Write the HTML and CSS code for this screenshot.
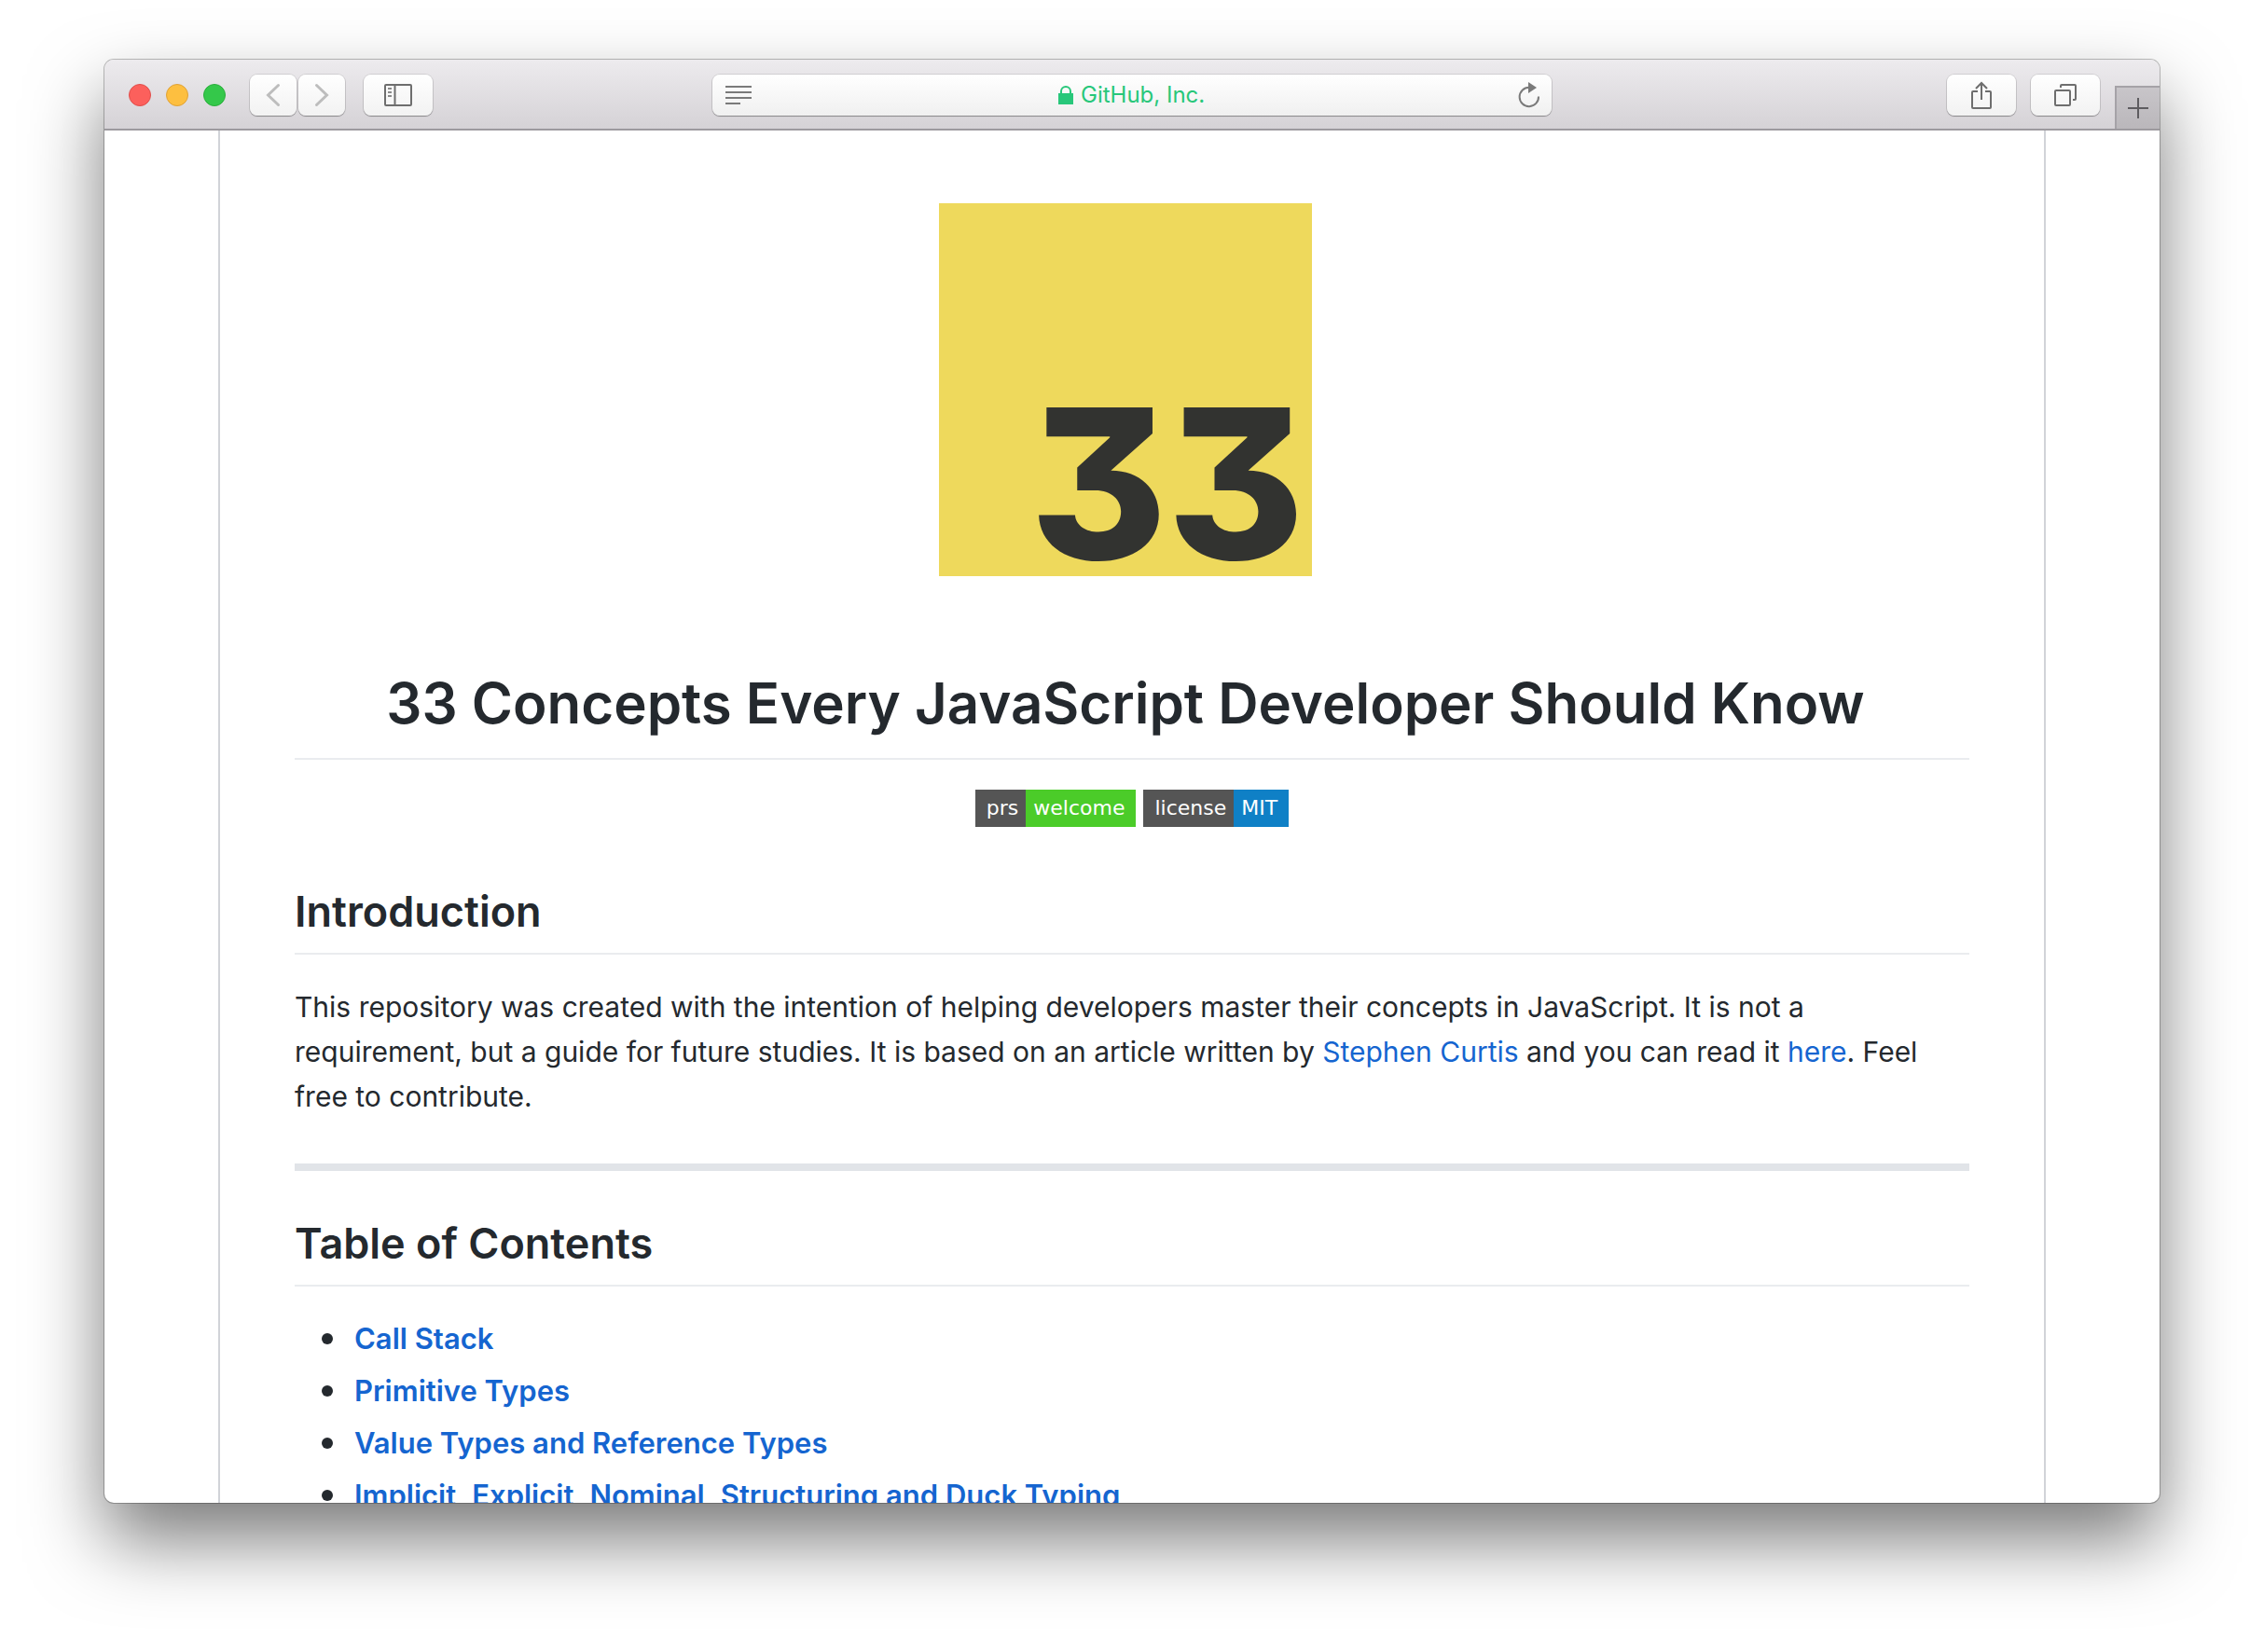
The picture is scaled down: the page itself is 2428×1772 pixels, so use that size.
FILE: index.html
```html
<!DOCTYPE html>
<html lang="en">
<head>
  <meta charset="UTF-8">
  <meta name="viewport" content="width=device-width, initial-scale=1.0">
  <title>33 Concepts Every JavaScript Developer Should Know</title>
  <link rel="stylesheet" href="styles.css">
</head>
<body>
  <div class="window">
    <header class="toolbar">
      <div class="toolbar-left">
        <div class="lights">
          <button class="light red" aria-label="Close"></button>
          <button class="light yellow" aria-label="Minimize"></button>
          <button class="light green" aria-label="Zoom"></button>
        </div>
        <nav class="history">
          <button class="tool-btn small" aria-label="Back">
            <svg width="16" height="26" viewBox="0 0 16 26"><path d="M13.5 2.500 2.500 13l11 10.500" fill="none" stroke="#bdbdbd" stroke-width="3" stroke-linecap="round"/></svg>
          </button>
          <button class="tool-btn small" aria-label="Forward">
            <svg width="16" height="26" viewBox="0 0 16 26"><path d="M2.500 2.500 13.500 13l-11 10.500" fill="none" stroke="#bdbdbd" stroke-width="3" stroke-linecap="round"/></svg>
          </button>
        </nav>
        <button class="tool-btn" aria-label="Show sidebar">
          <svg width="30" height="24" viewBox="0 0 30 24" fill="none" stroke="#6e6e6e" stroke-width="2">
            <rect x="1" y="1" width="28" height="22" rx="1"/>
            <path d="M11.500 1v22"/>
            <path d="M4 5h4M4 9h4M4 13h4" stroke="#8a8a8a"/>
          </svg>
        </button>
      </div>

      <div class="address">
        <button class="icon-btn" aria-label="Reader view">
          <svg width="28" height="20" viewBox="0 0 28 20"><path d="M0 1h28M0 7h28M0 13h28M0 19h16" stroke="#7a7a7a" stroke-width="2"/></svg>
        </button>
        <label class="address-field">
          <svg width="16" height="20" viewBox="0 0 16 20">
            <rect y="8" width="16" height="12" fill="#28c77a"/>
            <path d="M3 9V6a5 5 0 0 1 10 0v3" fill="none" stroke="#28c77a" stroke-width="2"/>
          </svg>
          <input class="address-input" type="text" value="GitHub, Inc." aria-label="Address">
        </label>
        <button class="icon-btn" aria-label="Reload">
          <svg width="24" height="28" viewBox="0 0 24 28">
            <path d="M22 15.500A10.200 10.200 0 1 1 12 5.800" fill="none" stroke="#7a7a7a" stroke-width="2"/>
            <path d="M11 0v12l9-6z" fill="#7a7a7a"/>
          </svg>
        </button>
      </div>

      <div class="toolbar-right">
        <button class="tool-btn" aria-label="Share">
          <svg width="22" height="32" viewBox="0 0 22 32" fill="none" stroke="#6e6e6e" stroke-width="2">
            <path d="M7 12H2a1 1 0 0 0-1 1v16a1 1 0 0 0 1 1h18a1 1 0 0 0 1-1V13a1 1 0 0 0-1-1h-5"/>
            <path d="M11 21V3M5 9l6-6 6 6"/>
          </svg>
        </button>
        <button class="tool-btn" aria-label="Show all tabs">
          <svg width="24" height="24" viewBox="0 0 24 24" fill="none" stroke="#6e6e6e" stroke-width="2">
            <rect x="1" y="7" width="16" height="16" rx="1"/>
            <path d="M7 4V2a1 1 0 0 1 1-1h14a1 1 0 0 1 1 1v14a1 1 0 0 1-1 1h-2"/>
          </svg>
        </button>
        <button class="new-tab" aria-label="New tab">
          <svg width="22" height="22" viewBox="0 0 22 22"><path d="M11 0v22M0 11h22" stroke="#5e5c60" stroke-width="2"/></svg>
        </button>
      </div>
    </header>

    <main class="page">
      <article class="readme">
        <h1 class="title">
          <svg class="logo" width="400" height="400" viewBox="0 0 400 400" role="img">
            <rect width="400" height="400" fill="#eed95c"/>
            <text class="logo-text" x="392" y="382" text-anchor="end">33</text>
          </svg>
          <span>33 Concepts Every JavaScript Developer Should Know</span>
        </h1>

        <div class="badges">
          <a class="badge" href="#"><span class="badge-key">prs</span><span class="badge-value green-bg">welcome</span></a>
          <a class="badge" href="#"><span class="badge-key">license</span><span class="badge-value blue-bg">MIT</span></a>
        </div>

        <h2>Introduction</h2>
        <p>This repository was created with the intention of helping developers master their concepts in JavaScript. It is not a requirement, but a guide for future studies. It is based on an article written by <a href="#">Stephen Curtis</a> and you can read it <a href="#">here</a>. Feel free to contribute.</p>

        <hr>

        <h2>Table of Contents</h2>
        <ul class="contents">
          <li><a href="#">Call Stack</a></li>
          <li><a href="#">Primitive Types</a></li>
          <li><a href="#">Value Types and Reference Types</a></li>
          <li><a href="#">Implicit, Explicit, Nominal, Structuring and Duck Typing</a></li>
        </ul>
      </article>
    </main>
  </div>
</body>
</html>
```
FILE: styles.css
```css
* {
  box-sizing: border-box;
}

body {
  margin: 0;
  height: 100vh;
  padding: 64px 112px 160px;
  background: #fff;
  color: #24292e;
  font-family: Inter, "Liberation Sans", sans-serif;
  font-size: 30px;
  line-height: 48px;
}

a {
  color: #1565d0;
  text-decoration: none;
}

button {
  padding: 0;
  border: 0;
  background: none;
}

svg {
  display: block;
}

/* Browser window */
.window {
  display: flex;
  flex-direction: column;
  height: 100%;
  border-radius: 10px;
  background: #fff;
  overflow: hidden;
  box-shadow: 0 0 0 1px rgba(0, 0, 0, 0.25), 0 40px 80px rgba(0, 0, 0, 0.52);
}

.toolbar {
  display: grid;
  grid-template-columns: 1fr minmax(0, 900px) 1fr;
  align-items: center;
  flex: none;
  height: 76px;
  padding-top: 2px;
  border-bottom: 2px solid #9d9a9f;
  background: linear-gradient(#edebee, #d5d2d6);
}

.toolbar-left {
  display: flex;
  align-items: center;
  padding-left: 26px;
}

.lights {
  display: flex;
  gap: 16px;
  margin-right: 26px;
}

.light {
  width: 24px;
  height: 24px;
  border-radius: 50%;
}

.red {
  background: #fc605c;
  border: 1px solid #e04e4b;
}

.yellow {
  background: #fdbf40;
  border: 1px solid #e0a236;
}

.green {
  background: #34c84a;
  border: 1px solid #2aae3b;
}

.history {
  display: flex;
  gap: 2px;
  margin-right: 20px;
}

.tool-btn {
  display: flex;
  align-items: center;
  justify-content: center;
  width: 74px;
  height: 44px;
  border-radius: 8px;
  background: linear-gradient(#fff, #f2f2f2);
  box-shadow: 0 0 0 1px rgba(0, 0, 0, 0.1), 0 1px 1px rgba(0, 0, 0, 0.3);
}

.tool-btn.small {
  width: 50px;
}

.address {
  display: flex;
  align-items: center;
  justify-content: space-between;
  height: 44px;
  padding: 0 12px 0 14px;
  border-radius: 8px;
  background: linear-gradient(#fff, #f0f0f0);
  box-shadow: 0 0 0 1px rgba(0, 0, 0, 0.1), 0 1px 1px rgba(0, 0, 0, 0.3);
}

.address-field {
  display: flex;
  align-items: center;
  gap: 8px;
}

.address-input {
  width: 140px;
  padding: 0;
  border: 0;
  background: none;
  color: #28c77a;
  font-family: inherit;
  font-size: 24px;
  line-height: 32px;
}

.toolbar-right {
  display: flex;
  align-items: center;
  justify-content: flex-end;
  gap: 16px;
  height: 100%;
}

.new-tab {
  display: flex;
  align-items: center;
  justify-content: center;
  align-self: flex-end;
  width: 48px;
  height: 46px;
  border-top: 2px solid #a5a2a7;
  border-left: 2px solid #a5a2a7;
  background: linear-gradient(#c8c5c9, #bab7bb);
}

/* Page content */
.page {
  flex: 1;
  min-height: 0;
  padding: 0 122px;
  overflow: hidden;
}

.readme {
  padding: 78px 80px 80px;
  border: 2px solid #d1d3d8;
  border-top: 0;
}

.title {
  display: flex;
  flex-direction: column;
  align-items: center;
  gap: 96px;
  margin: 0 0 32px;
  padding: 0 14px 19px 0;
  border-bottom: 2px solid #eaecef;
  font-size: 60px;
  font-weight: 600;
  line-height: 80px;
}

.logo-text {
  fill: #323330;
  font-size: 224px;
  font-weight: 800;
  font-feature-settings: "cv09";
}

.badges {
  display: flex;
  justify-content: center;
  gap: 8px;
  margin-bottom: 61px;
}

.badge {
  display: flex;
  color: #fff;
  font-family: "DejaVu Sans", sans-serif;
  font-size: 22px;
  line-height: 40px;
}

.badge-key {
  padding: 0 8px 0 12px;
  background: #555;
}

.badge-value {
  padding: 0 12px 0 8px;
}

.green-bg {
  background: #4bcc29;
}

.blue-bg {
  background: #0f80c6;
}

h2 {
  margin: 48px 0 32px;
  padding-bottom: 14px;
  border-bottom: 2px solid #eaecef;
  font-size: 45px;
  font-weight: 600;
  line-height: 60px;
}

p {
  margin: 0 0 32px;
}

hr {
  height: 8px;
  margin: 48px 0;
  border: 0;
  background: #e1e4e8;
}

.contents {
  margin: 0;
  padding-left: 29px;
  list-style: none;
}

.contents li {
  display: flex;
  align-items: center;
  gap: 23px;
  margin-bottom: 8px;
}

.contents li::before {
  content: "";
  width: 12px;
  height: 12px;
  border-radius: 50%;
  background: #24292e;
}

.contents a {
  font-size: 31px;
  font-weight: 600;
}
```
